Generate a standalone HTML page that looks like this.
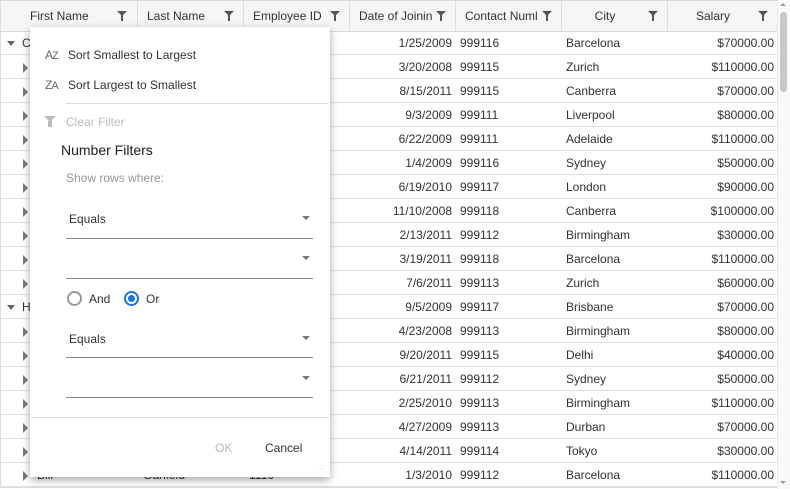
<!DOCTYPE html>
<html><head><meta charset="utf-8"><style>
*{box-sizing:border-box;margin:0;padding:0}
body{width:790px;height:489px;overflow:hidden;background:#fff;font-family:"Liberation Sans",sans-serif;font-size:12px;color:#333;position:relative}
.abs{position:absolute}
.hdr{position:absolute;left:0;top:0;width:777px;height:32px;background:#f6f6f6;border:1px solid #dcdcdc;border-right:none}
.hc{position:absolute;top:1px;height:31px;line-height:31px;font-size:12px;color:#333;border-left:1px solid #dcdcdc}
.hc span{position:absolute;top:0}
.fi{position:absolute;top:10px;width:0;height:0}
.row{position:absolute;left:0;width:777px;height:24px;border-bottom:1px solid #e0e0e0;border-left:1px solid #dcdcdc}
.row div{position:absolute;top:1px;line-height:23px;font-size:12px;color:#333;white-space:nowrap}
.r{text-align:right}
.popup{position:absolute;left:30px;top:27px;width:300px;height:450px;background:#fff;box-shadow:0 3px 8px rgba(0,0,0,.35)}
.popup div{position:absolute;white-space:nowrap}
.dd{height:1px;background:#8a8a8a}
.arr{width:0;height:0;border-left:4px solid transparent;border-right:4px solid transparent;border-top:4px solid #777}
</style></head><body>
<div class="hdr"></div>
<div class="abs" style="left:777px;top:0;width:13px;height:489px;background:#fafafa;border-left:1px solid #e6e6e6"></div>
<div class="abs" style="left:780px;top:12px;width:7px;height:80px;background:#c8c8c8;border-radius:4px"></div>
<div class="abs" style="left:780px;top:3px;border-left:3px solid transparent;border-right:3px solid transparent;border-bottom:3px solid #999"></div>
<div class="abs" style="left:780px;top:481px;border-left:3px solid transparent;border-right:3px solid transparent;border-top:3px solid #999"></div>
<div id="h"></div>
<div id="b"></div>
<div class="abs" style="left:0;top:487px;width:777px;height:1px;background:#dcdcdc"></div>

<div class="popup">
 <div style="left:15px;top:21px;font-size:12px;color:#666;letter-spacing:-1px">A<span style="font-size:11px">Z</span></div>
 <div style="left:38px;top:21px;font-size:12px;color:#333">Sort Smallest to Largest</div>
 <div style="left:15px;top:51px;font-size:12px;color:#666;letter-spacing:-1px">Z<span style="font-size:11px">A</span></div>
 <div style="left:38px;top:51px;font-size:12px;color:#333">Sort Largest to Smallest</div>
 <div style="left:36px;top:76px;width:262px;height:1px;background:#dcdcdc"></div>
 <div style="left:14px;top:89px;width:0;height:0;border-left:6px solid transparent;border-right:6px solid transparent;border-top:6px solid #bbb"></div>
 <div style="left:18px;top:94px;width:4px;height:6px;background:#bbb"></div>
 <div style="left:36px;top:88px;font-size:12px;color:#bbb">Clear Filter</div>
 <div style="left:31px;top:115px;font-size:14px;color:#222">Number Filters</div>
 <div style="left:36px;top:144px;font-size:12px;color:#999">Show rows where:</div>
 <div style="left:39px;top:185px;font-size:12px;color:#333">Equals</div>
 <div class="arr" style="left:272px;top:189px"></div>
 <div class="dd" style="left:36px;top:211px;width:247px"></div>
 <div class="arr" style="left:272px;top:229px"></div>
 <div class="dd" style="left:36px;top:251px;width:247px"></div>
 <div style="left:37px;top:264px;width:15px;height:15px;border:2px solid #999;border-radius:50%"></div>
 <div style="left:59px;top:265px;font-size:12px;color:#333">And</div>
 <div style="left:94px;top:264px;width:15px;height:15px;border:2px solid #1a73e8;border-radius:50%"></div>
 <div style="left:98px;top:268px;width:7px;height:7px;background:#1a73e8;border-radius:50%"></div>
 <div style="left:116px;top:265px;font-size:12px;color:#333">Or</div>
 <div style="left:39px;top:305px;font-size:12px;color:#333">Equals</div>
 <div class="arr" style="left:272px;top:309px"></div>
 <div class="dd" style="left:36px;top:330px;width:247px"></div>
 <div class="arr" style="left:272px;top:349px"></div>
 <div class="dd" style="left:36px;top:370px;width:247px"></div>
 <div style="left:1px;top:390px;width:298px;height:1px;background:#dcdcdc"></div>
 <div style="left:185px;top:414px;font-size:12px;color:#bbb">OK</div>
 <div style="left:235px;top:414px;font-size:12px;color:#333">Cancel</div>
 <div style="left:289px;top:439px;font-size:7px;color:#aaa;line-height:4px">.:</div>
</div>
<script>
var cols=[[18,137,'First Name'],[137,243,'Last Name'],[243,349,'Employee ID'],[349,455,'Date of Joinin'],[455,561,'Contact Numl'],[561,667,'City'],[667,777,'Salary']];
var h='';
cols.forEach(function(c,i){var w=c[1]-c[0];
var center=(i>=5);
h+='<div class="hc" style="left:'+c[0]+'px;width:'+w+'px;'+(i==0?'border-left:none;':'')+'"><span style="'+(center?'left:0;width:'+(w-20)+'px;text-align:center':'left:'+(i==0?12:9)+'px')+'">'+c[2]+'</span>'+
'<div class="fi" style="left:'+(w-20)+'px;border-left:5px solid transparent;border-right:5px solid transparent;border-top:5px solid #555"></div>'+
'<div style="position:absolute;left:'+(w-16)+'px;top:14px;width:2px;height:6px;background:#555"></div></div>';});
document.getElementById('h').innerHTML=h;
var d=[['G','1/25/2009','999116','Barcelona','$70000.00'],['','3/20/2008','999115','Zurich','$110000.00'],['','8/15/2011','999115','Canberra','$70000.00'],['','9/3/2009','999111','Liverpool','$80000.00'],['','6/22/2009','999111','Adelaide','$110000.00'],['','1/4/2009','999116','Sydney','$50000.00'],['','6/19/2010','999117','London','$90000.00'],['','11/10/2008','999118','Canberra','$100000.00'],['','2/13/2011','999112','Birmingham','$30000.00'],['','3/19/2011','999118','Barcelona','$110000.00'],['','7/6/2011','999113','Zurich','$60000.00'],['H','9/5/2009','999117','Brisbane','$70000.00'],['','4/23/2008','999113','Birmingham','$80000.00'],['','9/20/2011','999115','Delhi','$40000.00'],['','6/21/2011','999112','Sydney','$50000.00'],['','2/25/2010','999113','Birmingham','$110000.00'],['','4/27/2009','999113','Durban','$70000.00'],['','4/14/2011','999114','Tokyo','$30000.00'],['','1/3/2010','999112','Barcelona','$110000.00']];
var b='';
d.forEach(function(r,i){var t=31+i*24;
b+='<div class="row" style="top:'+t+'px">';
if(r[0]){b+='<div style="left:6px;top:10px;width:0;height:0;border-left:4px solid transparent;border-right:4px solid transparent;border-top:5px solid #666"></div><div style="left:21px">'+(r[0]=='G'?'C':'H')+'</div>';}
else{b+='<div style="left:22px;top:8px;width:0;height:0;border-top:5px solid transparent;border-bottom:5px solid transparent;border-left:5px solid #777"></div>';}
if(i==18){b+='<div style="left:36px">Bill</div><div style="left:142px">Garfield</div><div style="left:248px">1116</div>';}
b+='<div class="r" style="left:349px;width:102px">'+r[1]+'</div><div style="left:459px">'+r[2]+'</div><div style="left:565px">'+r[3]+'</div><div class="r" style="left:667px;width:106px">'+r[4]+'</div></div>';});
document.getElementById('b').innerHTML=b;
</script>
</body></html>
